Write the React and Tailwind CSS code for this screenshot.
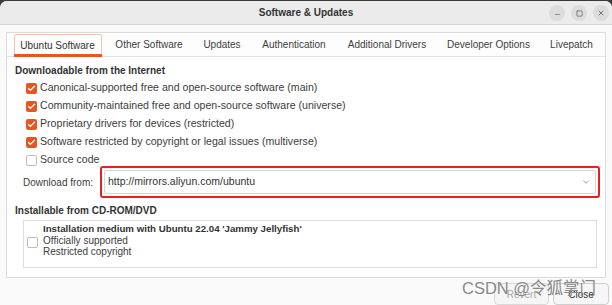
import { Check, ChevronDown, Minus, Square, X } from 'lucide-react'

const tabs = [
  { label: 'Ubuntu Software', w: 'w-[95px]', active: true },
  { label: 'Other Software', w: 'w-[88px]' },
  { label: 'Updates', w: 'w-[58px]' },
  { label: 'Authentication', w: 'w-[86px]' },
  { label: 'Additional Drivers', w: 'w-[100px]' },
  { label: 'Developer Options', w: 'w-[103px]' },
  { label: 'Livepatch', w: 'w-[63px]' },
]

const sources = [
  { label: 'Canonical-supported free and open-source software (main)', checked: true },
  { label: 'Community-maintained free and open-source software (universe)', checked: true },
  { label: 'Proprietary drivers for devices (restricted)', checked: true },
  { label: 'Software restricted by copyright or legal issues (multiverse)', checked: true },
  { label: 'Source code', checked: false },
]

const CheckBox = ({ checked }) =>
  checked ? (
    <span className="flex h-[11px] w-[11px] items-center justify-center rounded-[2px] bg-[#e95420]">
      <Check size={9} strokeWidth={3.5} className="text-white" />
    </span>
  ) : (
    <span className="h-[11px] w-[11px] rounded-[2px] border border-[#bdbdbd] bg-white" />
  )

const App = () => {
  return (
    <div className="h-[305px] w-[612px] overflow-hidden bg-[#3a3a3a]">
      <div className="relative mt-[1px] h-[304px] overflow-hidden rounded-t-[7px] bg-[#fafafa] text-[10px] text-[#3d3d3d] [font-family:'Liberation_Sans',Arial,sans-serif]">
        {/* title bar */}
        <div className="relative flex h-[24px] items-center justify-center border-b border-[#d8d8d8] bg-[#ebebeb]">
          <span className="text-[10px] font-bold text-[#333]">Software &amp; Updates</span>
          <div className="absolute right-[3px] top-[4px] flex gap-[6px]">
            <span className="flex h-[16px] w-[16px] items-center justify-center rounded-full bg-[#dcdcdc]">
              <Minus size={7} strokeWidth={2} className="mt-[3px] text-[#555]" />
            </span>
            <span className="flex h-[16px] w-[16px] items-center justify-center rounded-full bg-[#dcdcdc]">
              <Square size={7} strokeWidth={2} className="text-[#444]" />
            </span>
            <span className="flex h-[16px] w-[16px] items-center justify-center rounded-full bg-[#dcdcdc]">
              <X size={8} strokeWidth={2} className="text-[#444]" />
            </span>
          </div>
        </div>

        {/* notebook */}
        <div className="mx-[6px] mt-[7px] border border-[#dcdcdc] bg-white">
          <div className="flex h-[24px] items-stretch border-b border-[#e2e2e2] bg-[#fdfdfd] pl-[3px]">
            {tabs.map((t) => (
              <div key={t.label} className={`${t.w} flex items-stretch justify-center`}>
                {t.active ? (
                  <div className="relative mt-[1px] flex w-[88px] items-center justify-center rounded-t-[3px] border border-b-0 border-[#f2c6b4] text-[#333]">
                    {t.label}
                    <span className="absolute -bottom-[1px] -left-[1px] -right-[1px] h-[3px] bg-[#e95420]" />
                  </div>
                ) : (
                  <div className="flex items-center text-[#3d3d3d]">{t.label}</div>
                )}
              </div>
            ))}
          </div>

          <div className="px-[8px] pb-[9px] pt-[6px]">
            <div className="font-bold text-[#333]">Downloadable from the Internet</div>
            <div className="mt-[1px] flex flex-col pl-[11px] text-[10.6px]">
              {sources.map((s) => (
                <div key={s.label} className="flex h-[18px] items-center gap-[3px]">
                  <CheckBox checked={s.checked} />
                  <span>{s.label}</span>
                </div>
              ))}
            </div>

            <div className="-mr-[3px] -mt-[3px] flex items-center">
              <span className="w-[85px] pl-[8px]">Download from:</span>
              <div className="flex h-[32px] flex-1 items-center rounded-[3px] border-2 border-[#e5231b] p-[2px]">
                <div className="flex h-full flex-1 items-center justify-between rounded-[2px] border border-[#d6d6d6] bg-white pl-[3px] pr-[4px] text-[10.5px] text-[#333]">
                  <span>http://mirrors.aliyun.com/ubuntu</span>
                  <ChevronDown size={10} strokeWidth={1.5} className="text-[#666]" />
                </div>
              </div>
            </div>

            <div className="mt-[5px] font-bold text-[#333]">Installable from CD-ROM/DVD</div>
            <div className="ml-[8px] mt-[2px] flex h-[48px] gap-[5px] border border-[#dcdcdc] pl-[3px] pt-[2px]">
              <div className="flex items-center pb-[6px]">
                <CheckBox checked={false} />
              </div>
              <div className="flex flex-col leading-[11.5px]">
                <span className="text-[9.7px] font-bold text-[#333]">
                  Installation medium with Ubuntu 22.04 'Jammy Jellyfish'
                </span>
                <span>Officially supported</span>
                <span>Restricted copyright</span>
              </div>
            </div>
          </div>
        </div>

        {/* buttons */}
        <div className="mt-[5px] flex justify-end gap-[4px] pr-[3px]">
          <div className="flex h-[22px] w-[55px] items-center justify-center rounded-[4px] border border-[#dadada] bg-[#f6f6f6] text-[#aaa]">
            Revert
          </div>
          <div className="flex h-[22px] w-[56px] items-center justify-center rounded-[4px] border border-[#cfcfcf] bg-[#f6f6f6] text-[#333]">
            Close
          </div>
        </div>

        {/* watermark */}
        <div className="absolute left-[462px] top-[275px] text-[16.5px] text-[#8a8a8a] [font-family:'Liberation_Sans','Noto_Sans_CJK_SC',sans-serif]">
          CSDN @令狐掌门
        </div>
      </div>
    </div>
  )
}

export default App
